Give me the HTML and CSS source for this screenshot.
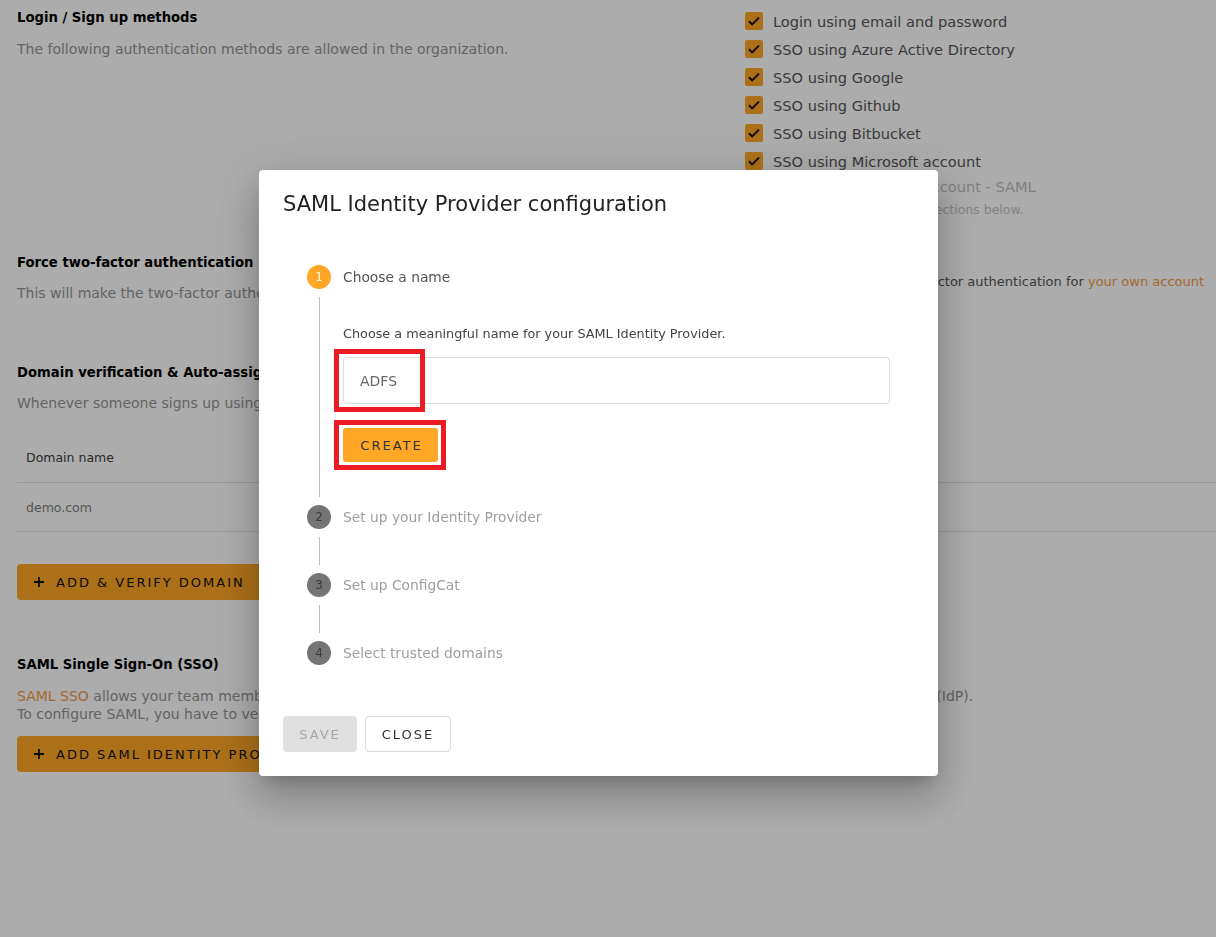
FILE: index.html
```html
<!DOCTYPE html>
<html lang="en">
<head>
<meta charset="utf-8">
<title>Authentication settings</title>
<link rel="stylesheet" href="styles.css">
</head>
<body>
<div class="page">
  <section class="sec sec-login">
    <div class="col-left">
      <h3 class="sec-title">Login / Sign up methods</h3>
      <p class="desc desc-first">The following authentication methods are allowed in the organization.</p>
    </div>
    <div class="col-right">
      <ul class="methods">
        <li class="method"><svg class="cb" width="18" height="18" viewBox="0 0 18 18"><rect width="18" height="18" rx="2" fill="#ffa726"/><path d="M4 9.3l3.1 3.1L14 5.6" fill="none" stroke="#111" stroke-width="2"/></svg><span>Login using email and password</span></li>
        <li class="method"><svg class="cb" width="18" height="18" viewBox="0 0 18 18"><rect width="18" height="18" rx="2" fill="#ffa726"/><path d="M4 9.3l3.1 3.1L14 5.6" fill="none" stroke="#111" stroke-width="2"/></svg><span>SSO using Azure Active Directory</span></li>
        <li class="method"><svg class="cb" width="18" height="18" viewBox="0 0 18 18"><rect width="18" height="18" rx="2" fill="#ffa726"/><path d="M4 9.3l3.1 3.1L14 5.6" fill="none" stroke="#111" stroke-width="2"/></svg><span>SSO using Google</span></li>
        <li class="method"><svg class="cb" width="18" height="18" viewBox="0 0 18 18"><rect width="18" height="18" rx="2" fill="#ffa726"/><path d="M4 9.3l3.1 3.1L14 5.6" fill="none" stroke="#111" stroke-width="2"/></svg><span>SSO using Github</span></li>
        <li class="method"><svg class="cb" width="18" height="18" viewBox="0 0 18 18"><rect width="18" height="18" rx="2" fill="#ffa726"/><path d="M4 9.3l3.1 3.1L14 5.6" fill="none" stroke="#111" stroke-width="2"/></svg><span>SSO using Bitbucket</span></li>
        <li class="method"><svg class="cb" width="18" height="18" viewBox="0 0 18 18"><rect width="18" height="18" rx="2" fill="#ffa726"/><path d="M4 9.3l3.1 3.1L14 5.6" fill="none" stroke="#111" stroke-width="2"/></svg><span>SSO using Microsoft account</span></li>
        <li class="method method-off"><svg class="cb" width="18" height="18" viewBox="0 0 18 18"><rect x="1" y="1" width="16" height="16" rx="2" fill="none" stroke="#cfcfcf" stroke-width="2"/></svg><span>SSO using Microsoft account - SAML</span></li>
      </ul>
      <p class="hint">Configure it in the SAML sections below.</p>
    </div>
  </section>

  <section class="sec sec-2fa">
    <div class="col-left">
      <h3 class="sec-title">Force two-factor authentication</h3>
      <p class="desc">This will make the two-factor authentication mandatory for every member of the organization.</p>
    </div>
    <div class="col-right col-2fa">
      <p class="note">You should first enable two-factor authentication for <a class="link" href="#">your own account</a></p>
    </div>
  </section>

  <section class="sec sec-domain">
    <h3 class="sec-title">Domain verification &amp; Auto-assign</h3>
    <p class="desc">Whenever someone signs up using a verified domain, they will be automatically added to the organization.</p>
    <div class="table">
      <div class="trow thead"><span>Domain name</span></div>
      <div class="trow"><span class="cell-muted">demo.com</span></div>
    </div>
    <button class="btn-orange btn-wide"><svg class="plus" width="10" height="10" viewBox="0 0 10 10"><path d="M5 0v10M0 5h10" stroke="#111" stroke-width="1.8"/></svg><span>ADD &amp; VERIFY DOMAIN</span></button>
  </section>

  <section class="sec sec-saml">
    <h3 class="sec-title">SAML Single Sign-On (SSO)</h3>
    <p class="desc desc-2"><a class="link" href="#">SAML SSO</a> allows your team members to sign in to ConfigCat quickly and safely through your company's existing identity provider (IdP).<br>To configure SAML, you have to verify at least one domain first.</p>
    <button class="btn-orange btn-wide btn-saml"><svg class="plus" width="10" height="10" viewBox="0 0 10 10"><path d="M5 0v10M0 5h10" stroke="#111" stroke-width="1.8"/></svg><span>ADD SAML IDENTITY PROVIDER</span></button>
  </section>
</div>

<div class="backdrop"></div>

<div class="dialog" role="dialog">
  <h2 class="dialog-title">SAML Identity Provider configuration</h2>
  <div class="dialog-content">
    <div class="stepper">
      <div class="step">
        <div class="step-head"><span class="step-num step-active">1</span><span class="step-label label-active">Choose a name</span></div>
        <div class="step-body">
          <p class="step-text">Choose a meaningful name for your SAML Identity Provider.</p>
          <div class="field">
            <div class="input">ADFS</div>
            <span class="mark mark-field"></span>
          </div>
          <div class="create-wrap">
            <button class="btn-create">CREATE</button>
            <span class="mark mark-create"></span>
          </div>
        </div>
      </div>
      <div class="step">
        <div class="step-head"><span class="step-num">2</span><span class="step-label">Set up your Identity Provider</span></div>
      </div>
      <div class="connector"></div>
      <div class="step">
        <div class="step-head"><span class="step-num">3</span><span class="step-label">Set up ConfigCat</span></div>
      </div>
      <div class="connector"></div>
      <div class="step">
        <div class="step-head"><span class="step-num">4</span><span class="step-label">Select trusted domains</span></div>
      </div>
    </div>
  </div>
  <div class="dialog-actions">
    <button class="btn-save" disabled>SAVE</button>
    <button class="btn-close">CLOSE</button>
  </div>
</div>
</body>
</html>
```

FILE: styles.css
```css
* { box-sizing: border-box; }

body {
  margin: 0;
  font-family: "DejaVu Sans", "Noto Sans", sans-serif;
  background: #fff;
  color: #555;
}

.page {
  padding: 7px 12px 0 17px;
}

.sec-title {
  margin: 0;
  font-size: 13.2px;
  line-height: 20px;
  font-weight: bold;
  color: #000;
}

.desc {
  margin: 11px 0 0;
  font-size: 14px;
  line-height: 18px;
  color: #959595;
  white-space: nowrap;
}

.desc-first { margin-top: 12px; }

.link {
  color: #f39c4a;
  text-decoration: none;
}

/* section 1 + 2: two columns */
.sec-login,
.sec-2fa {
  display: grid;
  grid-template-columns: 712px 1fr;
  column-gap: 16px;
}

.col-left {
  min-width: 0;
  padding-top: 1px;
}

.methods {
  list-style: none;
  margin: 0;
  padding: 0;
}

.method {
  display: flex;
  align-items: center;
  gap: 10px;
  height: 28px;
  font-size: 14.6px;
  color: #575757;
  white-space: nowrap;
}

.method-off {
  height: 22px;
  color: #bdbdbd;
}

.hint {
  margin: 4px 0 0 28px;
  font-size: 12.5px;
  line-height: 18px;
  color: #c4c4c4;
  white-space: nowrap;
}

.sec-2fa { margin-top: 33px; }

.col-2fa { padding-top: 21px; }

.note {
  margin: 0;
  font-size: 13px;
  line-height: 18px;
  color: #555;
  white-space: nowrap;
}

/* domain */
.sec-domain { margin-top: 61px; }

.table {
  margin-top: 20px;
  margin-right: -12px;
}

.trow {
  display: flex;
  align-items: center;
  height: 49px;
  padding-left: 9px;
  border-bottom: 1px solid #e0e0e0;
  font-size: 12.5px;
  color: #3d3d3d;
}

.thead { height: 51px; }

.cell-muted { color: #7d7d7d; }

.btn-orange {
  display: flex;
  align-items: center;
  gap: 12px;
  height: 36px;
  padding: 0 17px;
  border: 0;
  border-radius: 4px;
  background: #ffa726;
  font-family: inherit;
  font-size: 13px;
  letter-spacing: 2px;
  color: #111;
}

.btn-wide { margin-top: 32px; }

.sec-saml { margin-top: 55px; }

.desc-2 { margin-top: 12px; }

.btn-saml { margin-top: 13px; height: 36px; }

/* overlay */
.backdrop {
  position: fixed;
  inset: 0;
  background: rgba(0, 0, 0, 0.325);
}

.dialog {
  position: fixed;
  left: 259px;
  top: 170px;
  width: 679px;
  background: #fff;
  border-radius: 4px;
  box-shadow: 0 11px 15px -7px rgba(0,0,0,.2), 0 24px 38px 3px rgba(0,0,0,.14), 0 9px 46px 8px rgba(0,0,0,.12);
}

.dialog-title {
  margin: 0;
  padding: 18px 24px 14px;
  font-size: 21px;
  line-height: 32px;
  font-weight: normal;
  color: #222;
}

.dialog-content {
  padding: 8px 24px;
}

.stepper {
  padding: 23px 24px 24px;
}

.step-head {
  display: flex;
  align-items: center;
  gap: 12px;
  height: 24px;
}

.step-num {
  display: flex;
  align-items: center;
  justify-content: center;
  width: 24px;
  height: 24px;
  border-radius: 50%;
  background: #757575;
  color: #3a3a3a;
  font-size: 12px;
}

.step-active {
  background: #ffa726;
  color: #fff3dd;
}

.step-label {
  font-size: 13.8px;
  color: #9e9e9e;
}

.label-active { color: #555; }

.step-body {
  margin: 8px 0 8px 12px;
  padding: 28px 0 35px 23px;
  border-left: 1px solid #bdbdbd;
}

.step-text {
  margin: 0;
  font-size: 12.8px;
  line-height: 18px;
  color: #444;
}

.field {
  position: relative;
  margin-top: 14px;
}

.input {
  height: 47px;
  display: flex;
  align-items: center;
  padding-left: 16px;
  border: 1px solid #dcdcdc;
  border-radius: 4px;
  font-size: 14px;
  color: #666;
}

.create-wrap {
  position: relative;
  margin-top: 24px;
  width: 95px;
}

.btn-create {
  display: block;
  width: 95px;
  height: 34px;
  border: 0;
  border-radius: 3px;
  background: #ffa726;
  font-family: inherit;
  font-size: 13px;
  letter-spacing: 2px;
  color: #333;
  padding: 0 0 0 2px;
}

.mark {
  position: absolute;
  border: 5px solid #ed1c24;
  pointer-events: none;
}

.mark-field {
  left: -9px;
  top: -8px;
  width: 91px;
  height: 63px;
}

.mark-create {
  left: -9px;
  top: -8px;
  width: 112px;
  height: 50px;
}

.connector {
  margin: 8px 0 8px 12px;
  height: 28px;
  border-left: 1px solid #bdbdbd;
}

.dialog-actions {
  display: flex;
  gap: 8px;
  padding: 19px 24px 24px;
}

.btn-save,
.btn-close {
  height: 36px;
  border-radius: 4px;
  font-family: inherit;
  font-size: 13px;
  letter-spacing: 2px;
}

.btn-save {
  width: 74px;
  border: 0;
  background: #e0e0e0;
  color: #a6a6a6;
}

.btn-close {
  width: 86px;
  border: 1px solid #dcdcdc;
  background: #fff;
  color: #333;
}
```
